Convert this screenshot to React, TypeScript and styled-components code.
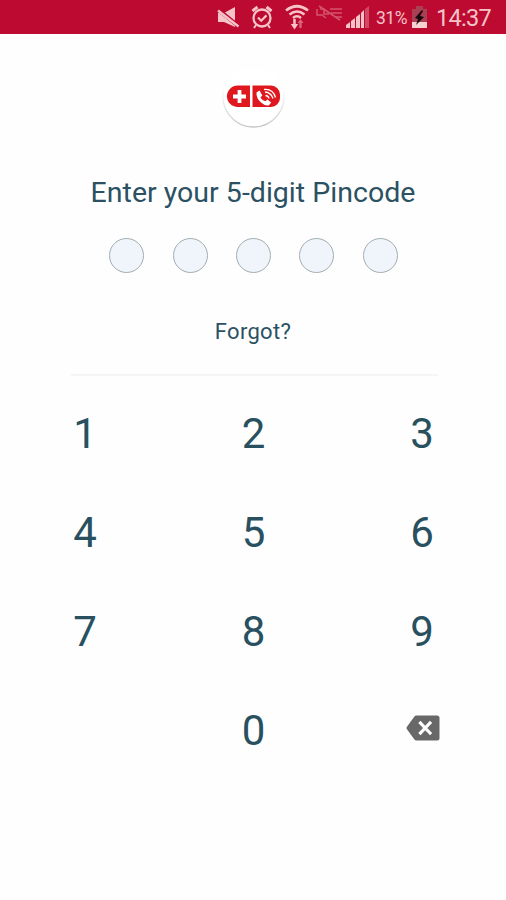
import React from "react";
import styled, { createGlobalStyle } from "styled-components";

const GlobalStyle = createGlobalStyle`
  * { box-sizing: border-box; }
  body { margin: 0; background: #fefefe; font-family: Roboto, "Liberation Sans", sans-serif; }
`;

const Screen = styled.main`
  width: 506px;
  height: 900px;
  display: flex;
  flex-direction: column;
  align-items: center;
  background: #fefefe;
  overflow: hidden;
`;

const StatusBar = styled.header`
  width: 100%;
  height: 34px;
  flex: none;
  display: flex;
  justify-content: flex-end;
  align-items: center;
  padding-right: 15px;
  background: #bd0a30;
  color: #f6c3c8;
`;

const StatusIcon = styled.svg<{ $gap: number }>`
  display: block;
  flex: none;
  margin-right: ${(p) => p.$gap}px;
`;

const BatteryLevel = styled.span`
  width: 32px;
  margin-right: 4px;
  font-size: 17.5px;
  line-height: 34px;
  letter-spacing: -0.5px;
  white-space: nowrap;
  padding-top: 2px;
`;

const Clock = styled.time`
  width: 55px;
  font-size: 23.5px;
  line-height: 34px;
  letter-spacing: -0.7px;
  white-space: nowrap;
  padding-top: 2px;
`;

const Logo = styled.svg`
  display: block;
  flex: none;
  margin-top: 36px;
`;

const Title = styled.h1`
  margin: 41px 0 0;
  font-size: 28.5px;
  font-weight: 400;
  line-height: 36px;
  letter-spacing: 0.02px;
  color: #2b5163;
  white-space: nowrap;
`;

const PinRow = styled.div`
  display: flex;
  gap: 28.3px;
  margin: 27px 0 0 1px;
`;

const PinDot = styled.span`
  width: 35px;
  height: 35px;
  border: 1px solid #a3adb1;
  border-radius: 50%;
  background: #eff5fb;
`;

const ForgotButton = styled.button`
  margin-top: 44px;
  padding: 0;
  border: 0;
  background: none;
  font: 400 22px/30px Roboto, "Liberation Sans", sans-serif;
  letter-spacing: 0.3px;
  color: #2b5163;
`;

const Divider = styled.hr`
  width: 367px;
  height: 2px;
  margin: 27px 0 0 2px;
  border: 0;
  background: #f4f5f6;
`;

const Keypad = styled.div`
  display: grid;
  grid-template-columns: repeat(3, 168.5px);
  grid-auto-rows: 99px;
  margin: 8px 0 0 1px;
`;

const Key = styled.button<{ $column?: number }>`
  display: flex;
  align-items: center;
  justify-content: center;
  padding: 0;
  border: 0;
  background: none;
  font: 400 42px/50px Roboto, "Liberation Sans", sans-serif;
  color: #28505f;
  ${(p) => (p.$column ? `grid-column: ${p.$column};` : "")}
`;

const DeleteKey = styled(Key)`
  padding: 0 0 5px 2px;
`;

const MuteIcon = () => (
  <StatusIcon $gap={11} width="23" height="22" viewBox="0 0 23 22">
    <path d="M1 7h6l11-6v20L7 16H1z" fill="currentColor" />
    <path d="M0 2.500l22 18" stroke="#bd0a30" strokeWidth="4" />
    <path d="M1 4.500l20.500 16" stroke="currentColor" strokeWidth="2.3" />
  </StatusIcon>
);

const AlarmIcon = () => (
  <StatusIcon $gap={12} width="22" height="24" viewBox="0 0 22 24" fill="none" stroke="currentColor">
    <circle cx="11" cy="13" r="8.5" strokeWidth="2.3" />
    <path d="M1.500 6l5-4M20.500 6l-5-4" strokeWidth="3" />
    <path d="M7 12.500l3.200 3.200 5.300-5.300" strokeWidth="2.200" />
    <path d="M5 20l-2 3M17 20l2 3" strokeWidth="2" />
  </StatusIcon>
);

const WifiIcon = () => (
  <StatusIcon $gap={7} width="24" height="26" viewBox="0 0 24 26" fill="none" stroke="currentColor">
    <path d="M1 6.500Q12-2 23 6.500" strokeWidth="2.700" />
    <path d="M4.500 10.500Q12 4.500 19.500 10.500" strokeWidth="2.500" />
    <path d="M8 14Q12 10.500 16 14" strokeWidth="2.500" />
    <path d="M9.500 15v6" strokeWidth="2.500" />
    <path d="M5.800 20h7.400l-3.700 5.500z" fill="currentColor" stroke="none" />
    <g opacity="0.5">
      <path d="M15.500 18v6" strokeWidth="2.300" />
      <path d="M12.500 19l3-4 3 4z" fill="currentColor" stroke="none" />
    </g>
  </StatusIcon>
);

const NoNetworkIcon = () => (
  <StatusIcon $gap={3} width="27" height="26" viewBox="0 0 27 26" fill="none" stroke="#de7185" opacity="0.72">
    <path d="M1 5v6h5l4 3M4 5h4v5h5M14 5h12M15 9h11M20 13h6" strokeWidth="1.500" />
    <path d="M3 2l21 14" strokeWidth="1.700" />
  </StatusIcon>
);

const SignalIcon = () => (
  <StatusIcon $gap={7} width="23" height="22" viewBox="0 0 23 22" fill="currentColor">
    <path d="M0 19l4-3v6H0zM5 15l4-3v10H5zM10 11l4-3v14h-4z" />
    <path d="M15 7l3-3v18h-3z" />
    <path d="M19 3l4-3v22h-4z" opacity="0.350" />
  </StatusIcon>
);

const BatteryIcon = () => (
  <StatusIcon $gap={9} width="15" height="24" viewBox="0 0 15 24">
    <path d="M4 1h7v3h4v19H0V4h4z" fill="#a94054" />
    <path d="M0 17h15v6H0z" fill="#f9d1d3" />
    <path d="M10 5l-7 8 3 1-2 6 8-8-4-1 3-5z" fill="#16070b" />
  </StatusIcon>
);

const CareLogo = () => (
  <Logo width="64" height="64" viewBox="0 0 64 64">
    <defs>
      <linearGradient id="rim" x1="0" y1="0" x2="0" y2="1">
        <stop offset="0" stopColor="#e2e2e2" stopOpacity="0.2" />
        <stop offset="0.6" stopColor="#dedede" />
        <stop offset="1" stopColor="#c4c4c4" />
      </linearGradient>
    </defs>
    <circle cx="32.500" cy="26.500" r="30.500" fill="#fff" />
    <path d="M2.700 20A30.500 30.500 0 1 0 62.300 20" fill="none" stroke="url(#rim)" strokeWidth="1.300" />
    <path d="M29 15.500H16.700a10.700 10.700 0 0 0 0 21.500H29z" fill="#df171e" />
    <path d="M31.500 15.500H50a9 9 0 0 1 9 9v3.500a9 9 0 0 1-9 9H31.500z" fill="#df171e" />
    <path d="M18.500 20v13M12 26.500h13" stroke="#fff" strokeWidth="3.800" />
    <path d="M35.500 22.500l3-2 2.800 5-1.900 2q1.800 3 5 3.800l2-1.700 3.800 2.900-2.200 2.800q-3.500 1.300-8-2.700-5-4.600-4.500-10.100z" fill="#fff" />
    <g fill="none" stroke="#fff" strokeWidth="1.300">
      <path d="M44.500 25.500q3 .3 3.500 3M44 22q6 .3 8 6.500M43 19.500q9-1 11.500 8" />
    </g>
  </Logo>
);

const BackspaceIcon = () => (
  <svg width="34" height="26" viewBox="0 0 34 26">
    <path d="M10.500.500H31q2.500 0 2.500 2.500v20q0 2.500-2.500 2.500H10.500q-1.500 0-2.300-1.300L.800 14q-.7-1 0-2L8.200 1.800Q9 .500 10.500.500z" fill="#686868" />
    <path d="M14.500 8l9.500 10M24 8L14.500 18" stroke="#fff" strokeWidth="3.200" strokeLinecap="square" />
  </svg>
);

const digits = ["1", "2", "3", "4", "5", "6", "7", "8", "9"];

export default function App() {
  return (
    <Screen>
      <GlobalStyle />
      <StatusBar>
        <MuteIcon />
        <AlarmIcon />
        <WifiIcon />
        <NoNetworkIcon />
        <SignalIcon />
        <BatteryLevel>31%</BatteryLevel>
        <BatteryIcon />
        <Clock>14:37</Clock>
      </StatusBar>
      <CareLogo />
      <Title>Enter your 5-digit Pincode</Title>
      <PinRow>
        {[0, 1, 2, 3, 4].map((slot) => (
          <PinDot key={slot} />
        ))}
      </PinRow>
      <ForgotButton>Forgot?</ForgotButton>
      <Divider />
      <Keypad>
        {digits.map((digit) => (
          <Key key={digit}>{digit}</Key>
        ))}
        <Key $column={2}>0</Key>
        <DeleteKey aria-label="Delete">
          <BackspaceIcon />
        </DeleteKey>
      </Keypad>
    </Screen>
  );
}
